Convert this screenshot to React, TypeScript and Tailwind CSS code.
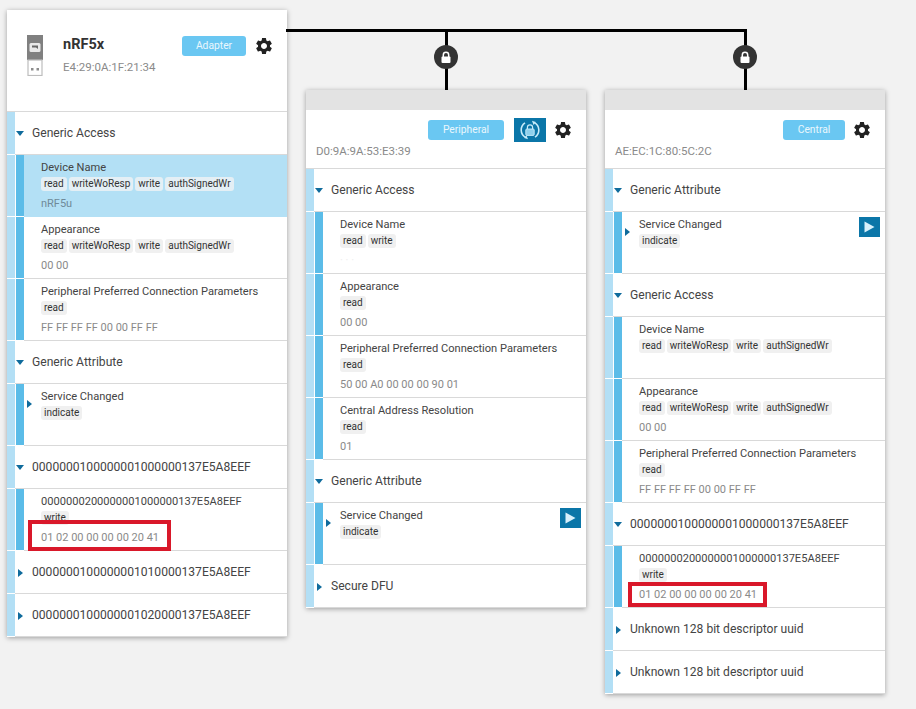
import React from "react";
import { MdSettings } from "react-icons/md";

const FONT = "[font-family:Roboto,'Liberation_Sans',Arial,sans-serif]";

function Gear() {
  return <MdSettings className="w-[20px] h-[20px] text-[#222] shrink-0" />;
}

function TriDown() {
  return (
    <svg width="8" height="5" viewBox="0 0 8 5" className="block">
      <path d="M0 0H8L4 5Z" fill="#0f6b9c" />
    </svg>
  );
}

function TriRight() {
  return (
    <svg width="5" height="8" viewBox="0 0 5 8" className="block">
      <path d="M0 0L5 4L0 8Z" fill="#0f6b9c" />
    </svg>
  );
}

function Play() {
  return (
    <div className="w-[21px] h-[20px] bg-[#0b76a8] flex items-center justify-center">
      <svg width="11" height="12" viewBox="0 0 11 12">
        <path d="M0.5 0.5L10.5 6L0.5 11.5Z" fill="#d8f0fb" />
      </svg>
    </div>
  );
}

function Lock() {
  return (
    <div className="absolute left-1/2 top-[16px] -translate-x-1/2 w-[24px] h-[24px] rounded-full bg-[#333] flex items-center justify-center">
      <svg width="12" height="13" viewBox="0 0 12 13">
        <path d="M3.3 6V4a2.7 2.7 0 0 1 5.4 0v2" fill="none" stroke="#fff" strokeWidth="1.5" />
        <rect x="1.5" y="5.5" width="9" height="6.5" rx="1" fill="#fff" />
      </svg>
    </div>
  );
}

function Dongle() {
  return (
    <svg width="16" height="41" viewBox="0 0 16 41" className="block shrink-0">
      <rect x="0" y="0" width="16" height="25" fill="#808080" />
      <rect x="2.5" y="8" width="11" height="9" rx="1.5" fill="#e8e8e8" />
      <path d="M5 10.5h6v3.5l-2-1.5h-4z" fill="#666" />
      <rect x="1" y="25" width="14" height="15.5" fill="#fff" stroke="#bdbdbd" strokeWidth="1.2" />
      <rect x="4" y="33" width="2.5" height="2.5" fill="#8c8c8c" />
      <rect x="9.5" y="33" width="2.5" height="2.5" fill="#8c8c8c" />
    </svg>
  );
}

function SyncLock() {
  return (
    <div className="w-[32px] h-[24px] bg-[#0b76a8] flex items-center justify-center shrink-0">
      <svg width="22" height="22" viewBox="0 0 22 22" fill="none">
        <path d="M6 3.8A8.6 8.6 0 0 0 6.5 18.4" stroke="#c9ecfa" strokeWidth="1.6" />
        <path d="M16 18.2A8.6 8.6 0 0 0 15.5 3.6" stroke="#c9ecfa" strokeWidth="1.6" />
        <path d="M13 1.8L16.8 3L14.6 6Z" fill="#c9ecfa" />
        <path d="M9 20.2L5.2 19L7.4 16Z" fill="#c9ecfa" />
        <path d="M8.4 10.2V8.4a2.6 2.6 0 0 1 5.2 0v1.8" stroke="#c9ecfa" strokeWidth="1.2" />
        <rect x="6.8" y="10" width="8.4" height="6.4" rx="1" fill="#8fd0ec" stroke="#c9ecfa" strokeWidth="0.9" />
      </svg>
    </div>
  );
}

function Role({ label, w }: { label: string; w: string }) {
  return (
    <div className={`${w} h-[20px] rounded-[3px] bg-[#6ac7f2] text-[#eaf7fd] text-[10.3px] flex items-center justify-center shrink-0`}>
      {label}
    </div>
  );
}

function Service({ name, open }: { name: string; open?: boolean }) {
  return (
    <div className="flex h-[43px]">
      <div className="w-2 h-full bg-[#b3dff5] border-b border-white shrink-0" />
      <div className="flex-1 flex items-center border-b border-[#d9d9d9] pt-px">
        <div className={`w-[17px] flex shrink-0 ${open ? "pl-px" : "pl-[3px]"}`}>{open ? <TriDown /> : <TriRight />}</div>
        <span className="text-[12.1px] text-[#444] whitespace-nowrap">{name}</span>
      </div>
    </div>
  );
}

type CharProps = {
  name: string;
  tags: string[];
  value?: string;
  selected?: boolean;
  arrow?: boolean;
  play?: boolean;
  boxClass?: string;
  faint?: boolean;
};

function Char({ name, tags, value, selected, arrow, play, boxClass, faint }: CharProps) {
  return (
    <div className="flex h-[62px]">
      <div className="w-2 h-full bg-[#b3dff5] border-b border-white shrink-0" />
      <div className="w-px shrink-0" />
      <div className="w-2 mb-px bg-[#5bbce8] shrink-0" />
      <div className={`relative flex-1 flex border-b ${selected ? "bg-[#b3e0f5] border-[#b3e0f5]" : "border-[#d9d9d9]"}`}>
        <div className="w-[17px] shrink-0 pt-[16px] pl-[3px]">{arrow ? <TriRight /> : null}</div>
        <div className="flex flex-col min-w-0">
          <div className="text-[11.1px] leading-[14px] mt-[5.5px] text-[#444] whitespace-nowrap">{name}</div>
          <div className="flex gap-[2px] mt-[2px]">
            {tags.map((t, i) => (
              <span key={i} className={`px-[3px] h-[14px] leading-[14px] rounded-[3px] text-[10px] text-[#333] ${selected ? "bg-[#e4eff5]" : "bg-[#f0f0f0]"}`}>
                {t}
              </span>
            ))}
          </div>
          {value ? (
            <div className={`text-[11px] leading-[13px] mt-[6px] whitespace-nowrap ${faint ? "text-[#ededed]" : selected ? "text-[#6f8a99]" : "text-[#8a8a8a]"}`}>{value}</div>
          ) : null}
        </div>
        {play ? (
          <div className="absolute right-[5px] top-[5px]">
            <Play />
          </div>
        ) : null}
        {boxClass ? <div className={`absolute border-[4px] border-[#d9182a] ${boxClass}`} /> : null}
      </div>
    </div>
  );
}

function Connector() {
  return (
    <div className="h-[80px] pt-[19px] flex flex-col items-center">
      <div className="relative flex-1 w-[3px] bg-black">
        <Lock />
      </div>
    </div>
  );
}

function SubHeader({ addr, role, w, sync }: { addr: string; role: string; w: string; sync?: boolean }) {
  return (
    <>
      <div className="h-[20px] bg-[#e3e3e3]" />
      <div className="h-[59px] border-b border-[#d9d9d9] flex flex-col px-[10px]">
        <div className="flex items-center justify-end h-[20px] mt-[10px] pr-[3px]">
          <Role label={role} w={w} />
          {sync ? (
            <div className="ml-[10px]">
              <SyncLock />
            </div>
          ) : null}
          <div className="ml-[7px]">
            <Gear />
          </div>
        </div>
        <div className="text-[11.5px] leading-[13px] mt-[5px] text-[#8a8a8a]">{addr}</div>
      </div>
    </>
  );
}

const ALL = ["read", "writeWoResp", "write", "authSignedWr"];
const UUID_S = "0000000100000001000000137E5A8EEF";
const UUID_C = "0000000200000001000000137E5A8EEF";

export default function App() {
  return (
    <div className={`relative w-[916px] h-[709px] overflow-hidden bg-[#f2f2f2] ${FONT}`}>
      <div className="absolute left-[286px] top-[29px] w-[461px] h-[3px] bg-black" />
      <div className="flex items-start pl-[7px] pt-[10px] gap-[19px]">
        <div className="w-[280px] bg-white shadow-[0_1px_5px_rgba(0,0,0,0.35)]">
          <div className="h-[102px] border-b border-[#d9d9d9] flex items-start pt-[25px] pl-[20px] pr-[13px]">
            <Dongle />
            <div className="ml-[20px] flex-1">
              <div className="text-[14.5px] leading-[18px] font-bold text-[#333] mt-px">nRF5x</div>
              <div className="text-[11.5px] leading-[13px] mt-[7px] text-[#8a8a8a]">E4:29:0A:1F:21:34</div>
            </div>
            <div className="flex items-center mt-px">
              <Role label="Adapter" w="w-[64px]" />
              <div className="ml-[8px]">
                <Gear />
              </div>
            </div>
          </div>
          <Service name="Generic Access" open />
          <Char name="Device Name" tags={ALL} value="nRF5u" selected />
          <Char name="Appearance" tags={ALL} value="00 00" />
          <Char name="Peripheral Preferred Connection Parameters" tags={["read"]} value="FF FF FF FF 00 00 FF FF" />
          <Service name="Generic Attribute" open />
          <Char name="Service Changed" tags={["indicate"]} arrow />
          <Service name={UUID_S} open />
          <Char name={UUID_C} tags={["write"]} value="01 02 00 00 00 00 20 41" boxClass="left-[4px] top-[31px] w-[143px] h-[31px]" />
          <Service name="0000000100000001010000137E5A8EEF" />
          <Service name="0000000100000001020000137E5A8EEF" />
        </div>

        <div className="w-[280px]">
          <Connector />
          <div className="bg-white shadow-[0_1px_5px_rgba(0,0,0,0.35)]">
            <SubHeader addr="D0:9A:9A:53:E3:39" role="Peripheral" w="w-[76px]" sync />
            <Service name="Generic Access" open />
            <Char name="Device Name" tags={["read", "write"]} value="· · ·" faint />
            <Char name="Appearance" tags={["read"]} value="00 00" />
            <Char name="Peripheral Preferred Connection Parameters" tags={["read"]} value="50 00 A0 00 00 00 90 01" />
            <Char name="Central Address Resolution" tags={["read"]} value="01" />
            <Service name="Generic Attribute" open />
            <Char name="Service Changed" tags={["indicate"]} arrow play />
            <Service name="Secure DFU" />
          </div>
        </div>

        <div className="w-[280px]">
          <Connector />
          <div className="bg-white shadow-[0_1px_5px_rgba(0,0,0,0.35)]">
            <SubHeader addr="AE:EC:1C:80:5C:2C" role="Central" w="w-[62px]" />
            <Service name="Generic Attribute" open />
            <Char name="Service Changed" tags={["indicate"]} arrow play />
            <Service name="Generic Access" open />
            <Char name="Device Name" tags={ALL} />
            <Char name="Appearance" tags={ALL} value="00 00" />
            <Char name="Peripheral Preferred Connection Parameters" tags={["read"]} value="FF FF FF FF 00 00 FF FF" />
            <Service name={UUID_S} open />
            <Char name={UUID_C} tags={["write"]} value="01 02 00 00 00 00 20 41" boxClass="left-[6px] top-[36px] w-[139px] h-[25px]" />
            <Service name="Unknown 128 bit descriptor uuid" />
            <Service name="Unknown 128 bit descriptor uuid" />
          </div>
        </div>
      </div>
    </div>
  );
}
